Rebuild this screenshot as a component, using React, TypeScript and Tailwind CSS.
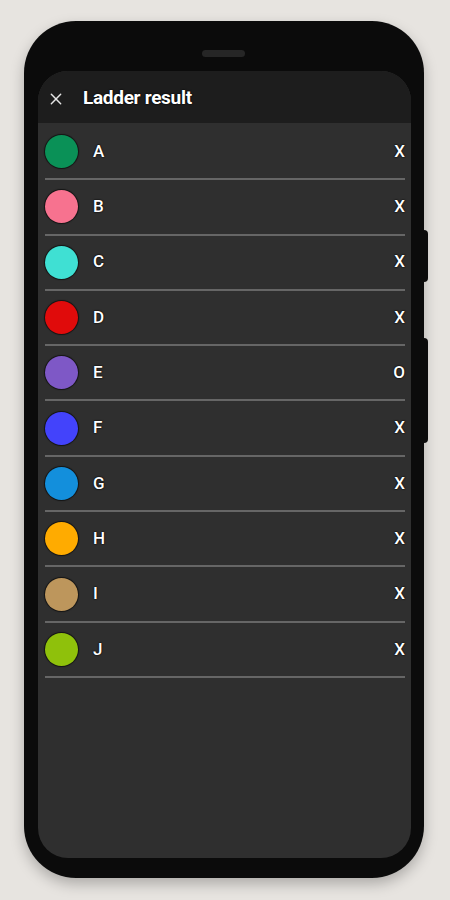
import React from 'react';

const RESULTS = [
  { name: 'A', color: '#0a9157', mark: 'X' },
  { name: 'B', color: '#f7728f', mark: 'X' },
  { name: 'C', color: '#3fe0d3', mark: 'X' },
  { name: 'D', color: '#e00b0b', mark: 'X' },
  { name: 'E', color: '#7e58c6', mark: 'O' },
  { name: 'F', color: '#4343fb', mark: 'X' },
  { name: 'G', color: '#138fdc', mark: 'X' },
  { name: 'H', color: '#ffab00', mark: 'X' },
  { name: 'I', color: '#bd965c', mark: 'X' },
  { name: 'J', color: '#8fc10b', mark: 'X' },
];

const shadow = '[text-shadow:0_0_2px_#000,0_0_1px_#000]';

export default function App() {
  return (
    <div className="w-[450px] h-[900px] bg-[#e7e4e0] pt-[21px] pl-[24px] font-['Roboto','Liberation_Sans',sans-serif]">
      <div className="relative w-[400px] h-[857px] rounded-[52px] bg-[#0b0b0b] pt-[50px] pl-[14px] pr-[13px] pb-[20px] shadow-[0_6px_14px_rgba(0,0,0,0.25)]">
        {/* speaker */}
        <div className="absolute left-[178px] top-[29px] w-[43px] h-[7px] rounded-full bg-[#262626]" />
        {/* side buttons */}
        <div className="absolute right-[-4px] top-[209px] w-[4px] h-[52px] rounded-r-sm bg-[#0b0b0b]" />
        <div className="absolute right-[-4px] top-[317px] w-[4px] h-[105px] rounded-r-sm bg-[#0b0b0b]" />

        <div className="h-full rounded-[30px] bg-[#2f2f2f] overflow-hidden flex flex-col">
          {/* header */}
          <div className="h-[52px] pt-[3px] bg-[#1d1d1d] flex items-center shrink-0">
            <svg
              className="ml-[10px] w-[16px] h-[16px]"
              viewBox="0 0 24 24"
              fill="none"
              stroke="#e6e6e6"
              strokeWidth={2.2}
              strokeLinecap="round"
            >
              <path d="M5 5l14 14M19 5L5 19" />
            </svg>
            <h1 className={`ml-[19px] text-[19px] font-bold text-white tracking-[-0.3px] ${shadow}`}>
              Ladder result
            </h1>
          </div>

          {/* list */}
          <div className="pt-[2px] pl-[7px] pr-[6px]">
            {RESULTS.map((r) => (
              <div
                key={r.name}
                className="h-[55.3px] flex items-center border-b-2 border-[#666666]"
              >
                <div
                  className="w-[33px] h-[33px] rounded-full shrink-0 shadow-[0_0_1px_1px_rgba(0,0,0,0.6)]"
                  style={{ backgroundColor: r.color }}
                />
                <span className={`ml-[15px] text-[17px] font-medium text-white ${shadow}`}>
                  {r.name}
                </span>
                <span className={`ml-auto text-[17px] font-medium text-white ${shadow}`}>
                  {r.mark}
                </span>
              </div>
            ))}
          </div>
        </div>
      </div>
    </div>
  );
}
